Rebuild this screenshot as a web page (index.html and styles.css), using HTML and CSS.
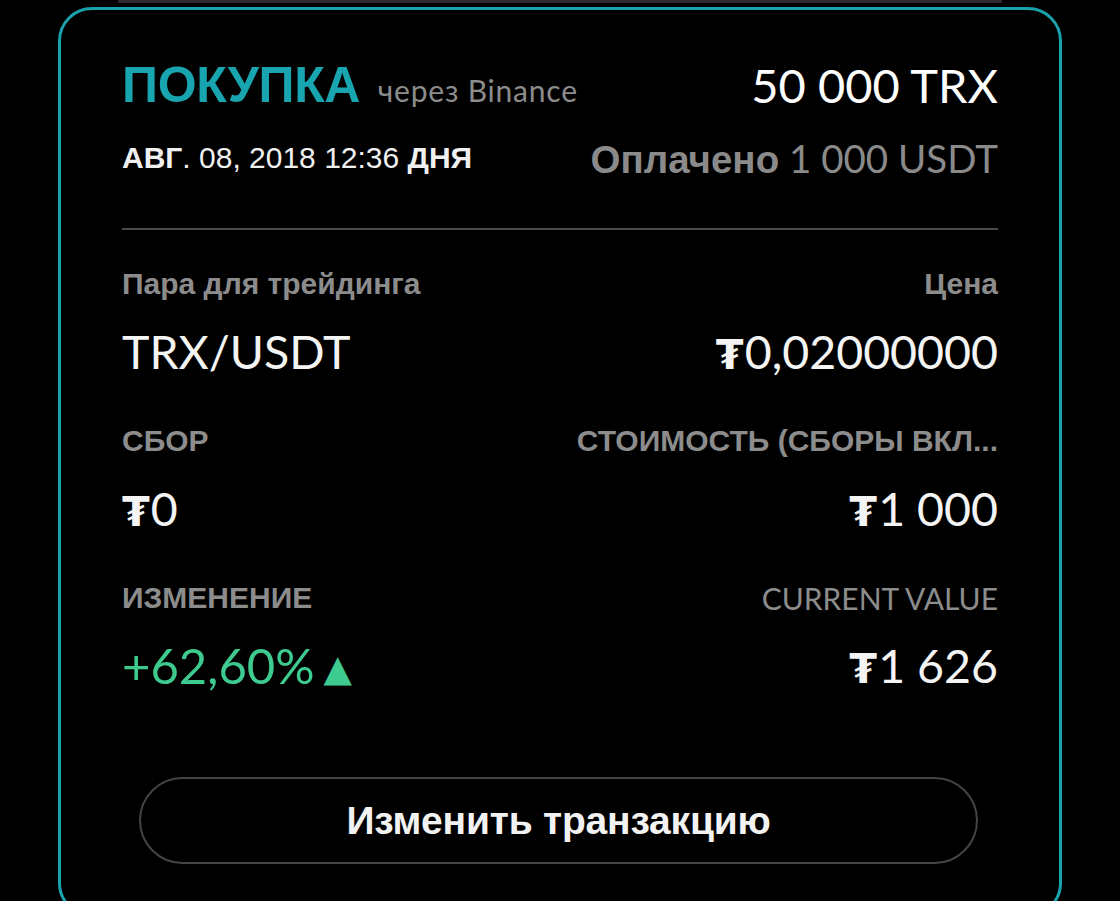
FILE: index.html
```html
<!DOCTYPE html>
<html lang="ru">
<head>
    <meta charset="UTF-8">
    <meta name="viewport" content="width=device-width, initial-scale=1.0">
    <title>Транзакция - TRX/USDT</title>
    <link rel="stylesheet" href="styles.css">
</head>
<body>
    <div class="top-line"></div>

    <div class="tx-card">
        <div class="tx-head">
            <div class="tx-row">
                <div class="tx-type">ПОКУПКА <span class="tx-via">через Binance</span></div>
                <div class="tx-amount">50 000 TRX</div>
            </div>
            <div class="tx-row tx-row-sub">
                <div class="tx-date"><b>АВГ</b>. 08, 2018 12:36 <b>ДНЯ</b></div>
                <div class="tx-paid"><b>Оплачено</b> 1 000 USDT</div>
            </div>
        </div>

        <div class="tx-divider"></div>

        <div class="tx-grid">
            <div class="tx-cell">
                <div class="tx-label">Пара для трейдинга</div>
                <div class="tx-value">TRX/USDT</div>
            </div>
            <div class="tx-cell right">
                <div class="tx-label">Цена</div>
                <div class="tx-value"><span class="cur">₮</span>0,02000000</div>
            </div>

            <div class="tx-cell">
                <div class="tx-label">СБОР</div>
                <div class="tx-value"><span class="cur">₮</span>0</div>
            </div>
            <div class="tx-cell right">
                <div class="tx-label">СТОИМОСТЬ (СБОРЫ ВКЛ...</div>
                <div class="tx-value"><span class="cur">₮</span>1 000</div>
            </div>

            <div class="tx-cell">
                <div class="tx-label">ИЗМЕНЕНИЕ</div>
                <div class="tx-value up">+62,60%<span class="arrow">▲</span></div>
            </div>
            <div class="tx-cell right">
                <div class="tx-label light">CURRENT VALUE</div>
                <div class="tx-value"><span class="cur">₮</span>1 626</div>
            </div>
        </div>

        <a href="#" class="edit-button">Изменить транзакцию</a>
    </div>
</body>
</html>
```

FILE: styles.css
```css
* {
    margin: 0;
    padding: 0;
    box-sizing: border-box;
}

body {
    font-family: 'Liberation Sans', Arial, sans-serif;
    background: #000;
    color: #f2f2f2;
    height: 901px;
    overflow: hidden;
}

.top-line {
    margin-left: 118px;
    width: 884px;
    height: 3px;
    background: #2c2c2c;
}

.tx-card {
    margin: 4px 58px 0 58px;
    height: 910px;
    border: 3px solid #1ba3ad;
    border-radius: 34px;
    padding: 45px 61px 0 61px;
}

.tx-row {
    display: flex;
    justify-content: space-between;
    align-items: center;
    height: 60px;
}

.tx-row-sub {
    height: 40px;
    margin-top: 23px;
}

.tx-type {
    color: #18a5b0;
    font-size: 50px;
    font-weight: bold;
    letter-spacing: -0.3px;
}

.tx-via {
    color: #8c8c8c;
    font-family: 'Lato', 'Noto Sans', sans-serif;
    font-size: 30px;
    font-weight: normal;
    letter-spacing: 0.8px;
    margin-left: 4px;
}

.tx-amount {
    font-family: 'Lato', 'Noto Sans', sans-serif;
    font-size: 47px;
    color: #fff;
}

.tx-date {
    font-size: 30px;
    color: #f0f0f0;
}

.tx-paid {
    font-family: 'Lato', 'Noto Sans', sans-serif;
    font-size: 38.5px;
    color: #8a8a8a;
}

.tx-paid b {
    font-family: 'Liberation Sans', Arial, sans-serif;
}

.tx-divider {
    height: 2px;
    background: #4a4a4a;
    margin-top: 50px;
}

.tx-grid {
    display: grid;
    grid-template-columns: 1fr 1fr;
    row-gap: 40px;
    margin-top: 36px;
}

.tx-cell.right {
    text-align: right;
}

.tx-label {
    color: #8c8c8c;
    font-size: 30px;
    font-weight: bold;
    line-height: 36px;
    white-space: nowrap;
}

.tx-label.light {
    font-family: 'Lato', 'Noto Sans', sans-serif;
    font-weight: normal;
    font-size: 30px;
}

.tx-value {
    font-family: 'Lato', 'Noto Sans', sans-serif;
    font-size: 46.5px;
    line-height: 56px;
    margin-top: 21px;
    color: #f4f4f4;
    white-space: nowrap;
}

.tx-value .cur {
    font-family: 'DejaVu Sans', sans-serif;
    font-weight: bold;
    font-size: 40px;
    margin-right: 1px;
}

.tx-value.up {
    color: #3ecb90;
    font-size: 49px;
    line-height: 50px;
    margin-top: 24px;
}

.tx-value .arrow {
    font-family: 'DejaVu Sans', sans-serif;
    font-size: 37px;
    margin-left: 9px;
    vertical-align: 3px;
}

.edit-button {
    display: flex;
    align-items: center;
    justify-content: center;
    height: 87px;
    margin: 80px 20px 0 17px;
    border: 2px solid #444;
    border-radius: 44px;
    color: #f2f2f2;
    font-size: 39px;
    font-weight: bold;
    letter-spacing: -0.2px;
    text-decoration: none;
}
```
